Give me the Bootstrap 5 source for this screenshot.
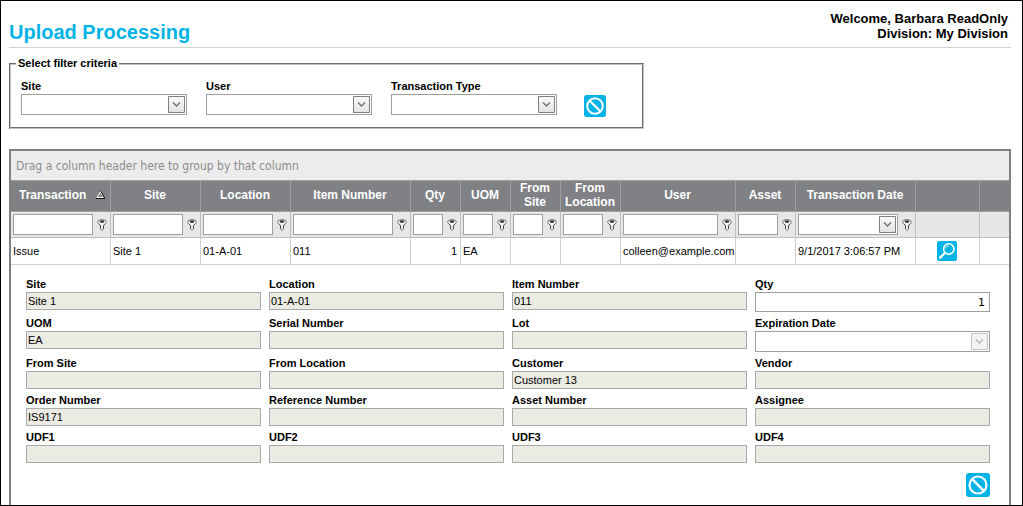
<!DOCTYPE html>
<html lang="en">
<head>
<meta charset="utf-8">
<meta name="viewport" content="width=device-width, initial-scale=1">
<title>Upload Processing</title>
<link rel="stylesheet" href="https://cdn.jsdelivr.net/npm/bootstrap@5.3.0/dist/css/bootstrap.min.css">
<style>
  :root { --brand: #00b3e6; --line: #9f9f9f; }
  body { font: 11px/15px "Liberation Sans", Arial, sans-serif; color: #000; background: #fff; }
  .page-shell { border: 1px solid #000; padding: 0 11px 0 8px; }
  .page-head { height: 47px; border-bottom: 1px solid #d3d3d3; }
  .page-title { font-size: 20px; line-height: 24px; font-weight: 700; color: var(--brand); padding-top: 19px; }
  .who { font-size: 13px; line-height: 15px; font-weight: 700; padding: 10px 3px 0 0; }
  .filter-set { width: 635px; max-width: 100%; border: 2px groove #c0c0c0; padding: 0 10px 12px; margin-top: 8px; }
  .filter-set legend { float: none; width: auto; font-size: 11px; line-height: 15px; font-weight: 700; padding: 0 2px; margin: 0 0 0 -5px; }
  .filter-fields { gap: 19px; padding-top: 8px; }
  .filter-fields > div { width: 166px; }
  .filter-fields .tile { margin-bottom: -2px; }
  .lbl { display: block; font-weight: 700; line-height: 15px; }
  .box { display: block; width: 100%; height: 21px; border: 1px solid var(--line); border-radius: 0; background: #fff; color: #000;
    font-size: 11px; line-height: 15px; padding: 0 3px; }
  select.box { appearance: none; padding: 0 22px 0 3px;
    background: #fff url("data:image/svg+xml,%3Csvg xmlns='http://www.w3.org/2000/svg' width='17' height='17'%3E%3ClinearGradient id='g' x2='0' y2='1'%3E%3Cstop stop-color='%23fafafa'/%3E%3Cstop offset='1' stop-color='%23e2e2e2'/%3E%3C/linearGradient%3E%3Cpath fill='url(%23g)' stroke='%237f7f7f' d='M.5.5h16v16H.5z'/%3E%3Cpath fill='none' stroke='%23707070' stroke-width='1.3' d='M5 6.5l3.5 3.5L12 6.5'/%3E%3C/svg%3E") no-repeat right 1px center; }
  select.box:disabled { opacity: 1;
    background-image: url("data:image/svg+xml,%3Csvg xmlns='http://www.w3.org/2000/svg' width='17' height='17'%3E%3Cpath fill='%23f3f3f3' stroke='%23c3c3c3' d='M.5.5h16v16H.5z'/%3E%3Cpath fill='none' stroke='%23b5b5b5' stroke-width='1.3' d='M5 6.5l3.5 3.5L12 6.5'/%3E%3C/svg%3E"); }
  .tile { border: 0; padding: 0; background: none; display: block; line-height: 0; }
  .tile svg { display: block; }
  .grid-frame { border: 2px solid #808080; border-bottom: 0; margin-top: 20px; }
  .group-panel { height: 29px; line-height: 30px; padding-left: 5px; background: #ececec; color: #8c8c8c;
    font-family: "DejaVu Sans Condensed", Roboto, sans-serif; font-size: 12px; }
  .trans { width: 100%; table-layout: fixed; border-collapse: separate; border-spacing: 0; }
  .trans th { height: 32px; padding: 0 5px 2px 4px; background: #808185; color: #fff; font-size: 12px; line-height: 14px; font-weight: 700;
    text-align: center; vertical-align: middle; border: solid #9f9f9f; border-width: 1px 1px 1px 0; }
  .trans td { border: solid #cfcfcf; border-width: 0 1px 1px 0; padding: 0 3px 0 2px; white-space: nowrap; }
  .trans tr > :last-child { border-right: 0; }
  .trans .filters td { height: 26px; background: #e7e7e7; border-color: #bfbfbf; }
  .trans .values td { height: 27px; }
  .w-user { padding-right: 0 !important; }
  .detail { display: grid; grid-template-columns: repeat(4, 1fr); gap: 4px 8px; padding: 12px 19px 0 15px; }
  .detail .box { height: 18px; padding: 0 1px; }
  .detail .box:read-only:not(select) { background: #ebebe4; border-color: #a9a9a9; }
  .detail .qty { height: 20px; padding-right: 4px; font-family: "DejaVu Sans", sans-serif; }
  .detail select.box { height: 21px; }
  .detail-foot { padding: 10px 19px 8px 0; }
</style>
</head>
<body>
<svg class="d-none" aria-hidden="true">
  <symbol id="i-clear" viewBox="0 0 24 24">
    <rect width="24" height="24" rx="3" fill="#00b3e6"/>
    <circle cx="12" cy="12" r="8.5" fill="none" stroke="#fff" stroke-width="2.2"/>
    <path d="M6.2 6.2l11.6 11.6" stroke="#fff" stroke-width="2.4"/>
  </symbol>
  <symbol id="i-find" viewBox="0 0 20 20">
    <rect width="20" height="20" rx="2" fill="#00b3e6"/>
    <circle cx="11.8" cy="8" r="5.2" fill="none" stroke="#fff" stroke-width="1.6"/>
    <path d="M8.8 7.5a3.2 3.2 0 0 1 3-2.7" fill="none" stroke="#fff" stroke-width=".8"/>
    <path d="M7.8 12l-4.6 4.6" stroke="#fff" stroke-width="2.4" stroke-linecap="round"/>
  </symbol>
  <symbol id="i-funnel" viewBox="0 0 10 12">
    <path d="M.7 2.800C.7 1.300 2.600.6 5 .6s4.300.7 4.300 2.200c0 1.700-1.600 2.600-2.800 3.900v3.400L5 11.400l-1.500-1.300V6.700C2.300 5.400.7 4.500.7 2.800z" fill="#fafafa" stroke="#6a6a6a" stroke-width=".9"/>
    <ellipse cx="5" cy="2.600" rx="2.500" ry="1.300" fill="#3c3c3c"/>
    <path d="M1.800 4.600L3.600 6.600v3.200M8.200 4.600L6.400 6.600v3.200" fill="none" stroke="#3c3c3c" stroke-width=".8"/>
  </symbol>
</svg>

<div class="page-shell min-vh-100 d-flex flex-column">
  <header class="page-head d-flex justify-content-between">
    <h1 class="page-title mb-0">Upload Processing</h1>
    <div class="who text-end">Welcome, Barbara ReadOnly<br>Division: My Division</div>
  </header>

  <form>
    <fieldset class="filter-set">
      <legend>Select filter criteria</legend>
      <div class="filter-fields d-flex align-items-end">
        <div><label class="lbl" for="f-site">Site</label><select class="box" id="f-site"><option></option></select></div>
        <div><label class="lbl" for="f-user">User</label><select class="box" id="f-user"><option></option></select></div>
        <div><label class="lbl" for="f-type">Transaction Type</label><select class="box" id="f-type"><option></option></select></div>
        <button type="reset" class="tile ms-2" aria-label="Clear filters"><svg width="22" height="22"><use href="#i-clear"/></svg></button>
      </div>
    </fieldset>
  </form>

  <main class="grid-frame flex-grow-1">
    <div class="group-panel">Drag a column header here to group by that column</div>
    <table class="trans">
      <colgroup>
        <col style="width:100px"><col style="width:90px"><col style="width:90px"><col style="width:120px"><col style="width:50px"><col style="width:50px"><col style="width:50px"><col style="width:60px"><col style="width:115px"><col style="width:60px"><col style="width:120px"><col style="width:64px"><col>
      </colgroup>
      <thead>
        <tr>
          <th><div class="d-flex align-items-center justify-content-between ps-1"><span>Transaction</span><svg width="9" height="8"><path d="M4.500 1L8 7H1z" fill="#808185"/><path d="M1 6.500L4.500 1 7.500 6.500z" fill="none" stroke="#fff"/><path d="M0 7.500h9M5 .5L8.500 7" stroke="#111" fill="none"/></svg></div></th>
          <th>Site</th><th>Location</th><th>Item Number</th><th>Qty</th><th>UOM</th><th>From Site</th><th>From Location</th><th>User</th><th>Asset</th><th>Transaction Date</th><th></th><th></th>
        </tr>
      </thead>
      <tbody>
        <tr class="filters">
          <td><div class="d-flex align-items-center"><input class="box" aria-label="Filter transaction"><button class="tile ms-1" aria-label="Transaction filter options"><svg width="10" height="12"><use href="#i-funnel"/></svg></button></div></td>
          <td><div class="d-flex align-items-center"><input class="box" aria-label="Filter site"><button class="tile ms-1" aria-label="Site filter options"><svg width="10" height="12"><use href="#i-funnel"/></svg></button></div></td>
          <td><div class="d-flex align-items-center"><input class="box" aria-label="Filter location"><button class="tile ms-1" aria-label="Location filter options"><svg width="10" height="12"><use href="#i-funnel"/></svg></button></div></td>
          <td><div class="d-flex align-items-center"><input class="box" aria-label="Filter item number"><button class="tile ms-1" aria-label="Item number filter options"><svg width="10" height="12"><use href="#i-funnel"/></svg></button></div></td>
          <td><div class="d-flex align-items-center"><input class="box" aria-label="Filter quantity"><button class="tile ms-1" aria-label="Quantity filter options"><svg width="10" height="12"><use href="#i-funnel"/></svg></button></div></td>
          <td><div class="d-flex align-items-center"><input class="box" aria-label="Filter UOM"><button class="tile ms-1" aria-label="UOM filter options"><svg width="10" height="12"><use href="#i-funnel"/></svg></button></div></td>
          <td><div class="d-flex align-items-center"><input class="box" aria-label="Filter from site"><button class="tile ms-1" aria-label="From site filter options"><svg width="10" height="12"><use href="#i-funnel"/></svg></button></div></td>
          <td><div class="d-flex align-items-center"><input class="box" aria-label="Filter from location"><button class="tile ms-1" aria-label="From location filter options"><svg width="10" height="12"><use href="#i-funnel"/></svg></button></div></td>
          <td><div class="d-flex align-items-center"><input class="box" aria-label="Filter user"><button class="tile ms-1" aria-label="User filter options"><svg width="10" height="12"><use href="#i-funnel"/></svg></button></div></td>
          <td><div class="d-flex align-items-center"><input class="box" aria-label="Filter asset"><button class="tile ms-1" aria-label="Asset filter options"><svg width="10" height="12"><use href="#i-funnel"/></svg></button></div></td>
          <td><div class="d-flex align-items-center"><select class="box" aria-label="Filter transaction date"><option></option></select><button class="tile ms-1" aria-label="Date filter options"><svg width="10" height="12"><use href="#i-funnel"/></svg></button></div></td>
          <td></td><td></td>
        </tr>
        <tr class="values">
          <td>Issue</td><td>Site 1</td><td>01-A-01</td><td>011</td><td class="text-end">1</td><td>EA</td><td></td><td></td><td class="w-user">colleen@example.com</td><td></td><td>9/1/2017 3:06:57 PM</td>
          <td><button class="tile mx-auto" aria-label="View details"><svg width="20" height="20"><use href="#i-find"/></svg></button></td><td></td>
        </tr>
      </tbody>
    </table>

    <form>
      <div class="detail">
        <div><label class="lbl" for="d1">Site</label><input class="box" id="d1" value="Site 1" readonly></div>
        <div><label class="lbl" for="d2">Location</label><input class="box" id="d2" value="01-A-01" readonly></div>
        <div><label class="lbl" for="d3">Item Number</label><input class="box" id="d3" value="011" readonly></div>
        <div><label class="lbl" for="d4">Qty</label><input class="box qty text-end" id="d4" value="1"></div>
        <div><label class="lbl" for="d5">UOM</label><input class="box" id="d5" value="EA" readonly></div>
        <div><label class="lbl" for="d6">Serial Number</label><input class="box" id="d6" readonly></div>
        <div><label class="lbl" for="d7">Lot</label><input class="box" id="d7" readonly></div>
        <div><label class="lbl" for="d8">Expiration Date</label><select class="box" id="d8" disabled><option></option></select></div>
        <div><label class="lbl" for="d9">From Site</label><input class="box" id="d9" readonly></div>
        <div><label class="lbl" for="d10">From Location</label><input class="box" id="d10" readonly></div>
        <div><label class="lbl" for="d11">Customer</label><input class="box" id="d11" value="Customer 13" readonly></div>
        <div><label class="lbl" for="d12">Vendor</label><input class="box" id="d12" readonly></div>
        <div><label class="lbl" for="d13">Order Number</label><input class="box" id="d13" value="IS9171" readonly></div>
        <div><label class="lbl" for="d14">Reference Number</label><input class="box" id="d14" readonly></div>
        <div><label class="lbl" for="d15">Asset Number</label><input class="box" id="d15" readonly></div>
        <div><label class="lbl" for="d16">Assignee</label><input class="box" id="d16" readonly></div>
        <div><label class="lbl" for="d17">UDF1</label><input class="box" id="d17" readonly></div>
        <div><label class="lbl" for="d18">UDF2</label><input class="box" id="d18" readonly></div>
        <div><label class="lbl" for="d19">UDF3</label><input class="box" id="d19" readonly></div>
        <div><label class="lbl" for="d20">UDF4</label><input class="box" id="d20" readonly></div>
      </div>
      <div class="detail-foot d-flex justify-content-end">
        <button type="button" class="tile" aria-label="Close details"><svg width="24" height="24"><use href="#i-clear"/></svg></button>
      </div>
    </form>
  </main>
</div>
<script src="https://cdn.jsdelivr.net/npm/bootstrap@5.3.0/dist/js/bootstrap.bundle.min.js"></script>
</body>
</html>
